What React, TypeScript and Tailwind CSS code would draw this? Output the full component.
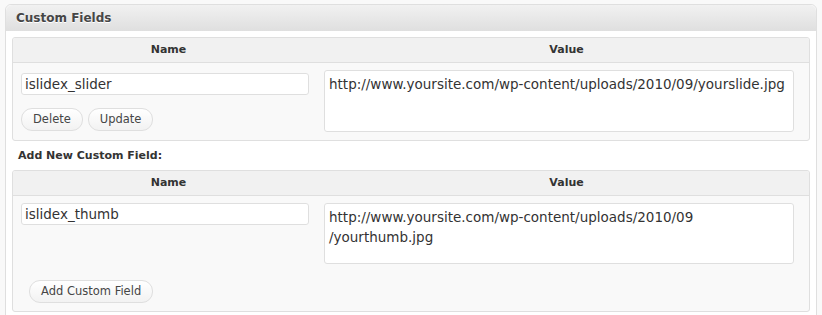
const font = { fontFamily: '"DejaVu Sans", Verdana, sans-serif' };

function Header() {
  return (
    <div className="flex h-[25px] items-center border-b border-[#dfdfdf] bg-[#f1f1f1] text-[11px] font-bold text-[#333]">
      <div className="w-[311px] text-center">Name</div>
      <div className="flex-1 text-center">Value</div>
    </div>
  );
}

function Btn({ label }: { label: string }) {
  return (
    <button className="block h-[23px] rounded-[11px] border border-[#dfdfdf] bg-gradient-to-b from-[#ffffff] to-[#f2f2f2] px-[11px] text-[11.5px] text-[#464646]">
      {label}
    </button>
  );
}

const inputCls =
  'block h-[22px] w-[288px] rounded-[3px] border border-[#dfdfdf] bg-white px-[3px] text-[13.5px] text-[#333] outline-none';
const areaCls =
  'block w-[470px] resize-none rounded-[3px] border border-[#dfdfdf] bg-white px-[4px] py-[3px] text-[13.5px] leading-[20px] text-[#333] outline-none';

export default function App() {
  return (
    <div className="h-[315px] w-[822px] overflow-hidden bg-[#f9f9f9] px-[5px] pt-[4px] text-[#333]" style={font}>
      <div className="h-[320px] rounded-t-[6px] border border-[#dfdfdf] bg-white">
        <div className="flex h-[26px] items-center rounded-t-[6px] bg-gradient-to-b from-[#f1f1f1] to-[#dfdfdf] pl-[10px] text-[12px] font-bold text-[#464646] [text-shadow:0_1px_0_#fff]">
          Custom Fields
        </div>
        <div className="px-[6px] pt-[6px]">
          <div className="overflow-hidden rounded-[3px] border border-[#dfdfdf] bg-[#f9f9f9]">
            <Header />
            <div className="flex pb-[8px]">
              <div className="w-[311px] pl-[8px] pt-[10px]">
                <input readOnly value="islidex_slider" className={inputCls} />
                <div className="mt-[13px] flex gap-[5px]">
                  <Btn label="Delete" />
                  <Btn label="Update" />
                </div>
              </div>
              <div className="pt-[7px]">
                <textarea
                  readOnly
                  value="http://www.yoursite.com/wp-content/uploads/2010/09/yourslide.jpg"
                  className={areaCls + ' h-[62px]'}
                />
              </div>
            </div>
          </div>
          <div className="pb-[8px] pl-[6px] pt-[8px] text-[11px] font-bold leading-[13px] text-[#333]">Add New Custom Field:</div>
          <div className="overflow-hidden rounded-[3px] border border-[#dfdfdf] bg-[#f9f9f9]">
            <Header />
            <div className="flex">
              <div className="w-[311px] pl-[8px] pt-[7px]">
                <input readOnly value="islidex_thumb" className={inputCls} />
              </div>
              <div className="pt-[7px]">
                <textarea
                  readOnly
                  value={'http://www.yoursite.com/wp-content/uploads/2010/09\n/yourthumb.jpg'}
                  className={areaCls + ' h-[61px]'}
                />
              </div>
            </div>
            <div className="pb-[8px] pl-[16px] pt-[16px]">
              <Btn label="Add Custom Field" />
            </div>
          </div>
        </div>
      </div>
    </div>
  );
}
